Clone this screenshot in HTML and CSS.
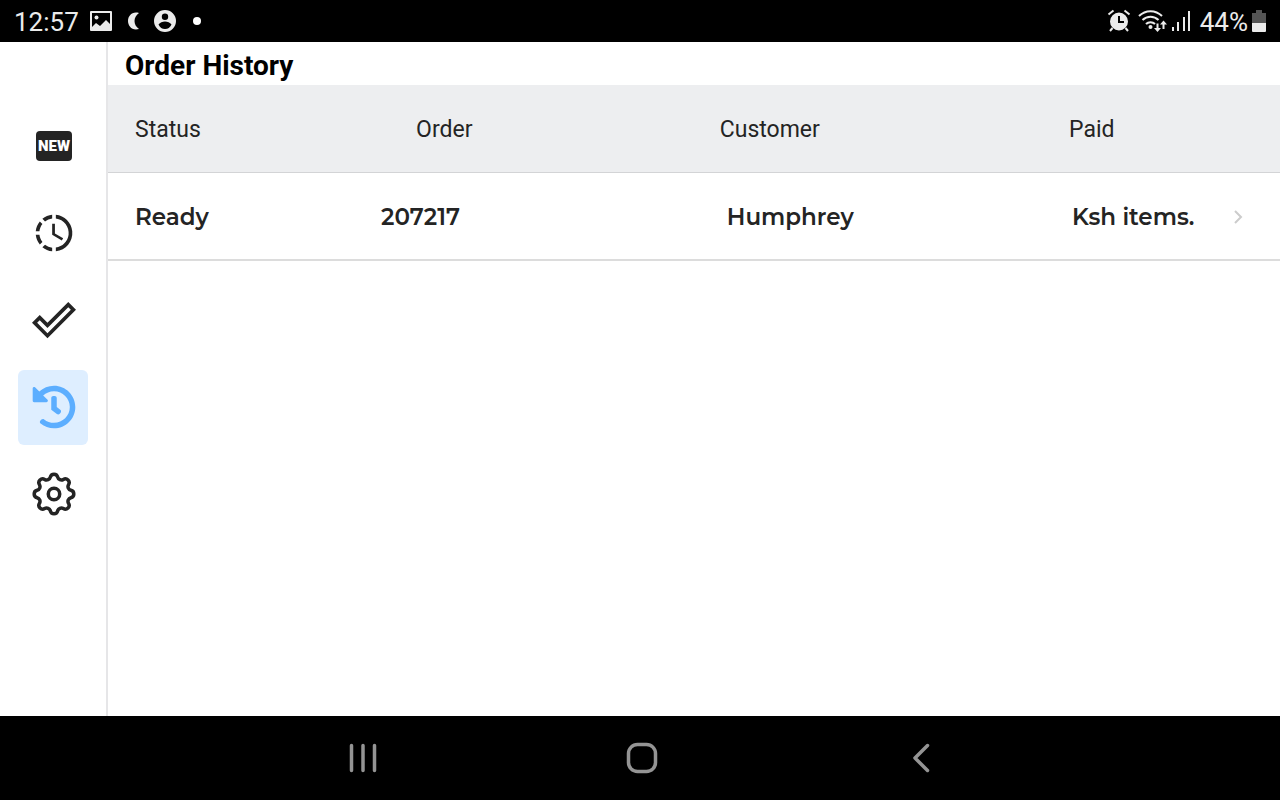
FILE: index.html
```html
<!DOCTYPE html>
<html lang="en">
<head>
<meta charset="utf-8">
<meta name="viewport" content="width=device-width, initial-scale=1">
<title>Order History</title>
<link rel="stylesheet" href="styles.css">
</head>
<body>
<header class="status-bar">
  <div class="status-left">
    <time class="status-text">12:57</time>
    <svg class="icon-image" viewBox="0 0 22 20" width="22" height="20"><path fill-rule="evenodd" d="M1 0h20q1 0 1 1v18q0 1-1 1H1q-1 0-1-1V1q0-1 1-1zM2 2v14l4-4 4 3 6-6 4 4V2z"/><circle cx="6.500" cy="6.500" r="2"/></svg>
    <svg class="icon-moon" viewBox="0 0 12 18" width="12" height="18"><path d="M11 1C4-1 0 4 0 9s4 10 11 8C5 13 5 5 11 1z"/></svg>
    <svg class="icon-person" viewBox="0 0 22 22" width="22" height="22"><path fill-rule="evenodd" d="M11 0a11 11 0 1 1 0 22 11 11 0 0 1 0-22zM11 3.500a3.200 3.200 0 1 0 0 6.400 3.200 3.200 0 0 0 0-6.400zM4.500 14.500c1.500 3 3.500 4.500 6.500 4.500s5-1.500 6.500-4.500c-1.500-2-4-3-6.500-3s-5 1-6.500 3z"/></svg>
    <span class="dot"></span>
  </div>
  <div class="status-right">
    <svg viewBox="0 0 24 24" width="24" height="24"><path fill-rule="evenodd" d="M12 3.500a9 9 0 1 1 0 18 9 9 0 0 1 0-18zM11 7v7h6v-2h-4V7z"/><path d="M5.500 19 3 22M18.500 19l2.500 3M1.500 5.500l5-4M22.500 5.500l-5-4" fill="none" stroke="#ebebeb" stroke-width="2"/></svg>
    <svg class="icon-wifi" viewBox="0 0 29 24" width="29" height="24"><g fill="none" stroke="#ebebeb" stroke-width="2"><path d="M1 7C7.500 .5 17.500 .5 24 7M4.500 11c4.500-4.500 11.500-4.500 16 0M8 15c2.500-2.500 6.500-2.500 9 0"/><path d="M19.500 14.500v6M25.500 20v-6"/></g><circle cx="12.500" cy="18" r="2"/><path d="M16 19h7l-3.500 4zM22 15.500h7l-3.500-4z"/></svg>
    <svg class="icon-signal" viewBox="0 0 19 20" width="19" height="20"><path d="M0 16h2v4H0zM5 11h2v9H5zM11 6h2v14h-2zM16 0h2v20h-2z"/></svg>
    <span class="status-text">44%</span>
    <svg class="icon-battery" viewBox="0 0 14 22" width="14" height="22"><path fill="#555" d="M4 0h6v3h4v11H0V3h4z"/><path d="M0 13h14v8q0 1-1 1H1q-1 0-1-1z"/></svg>
  </div>
</header>

<div class="app">
  <nav class="sidebar" aria-label="Orders">
    <button class="tab" type="button"><span class="new-badge">NEW</span></button>
    <button class="tab" type="button" aria-label="In progress"><svg viewBox="0 0 24 24" width="44" height="44"><path d="M13,2.03V2.05L13,4.05C17.39,4.59 20.5,8.58 19.96,12.97C19.5,16.61 16.64,19.5 13,19.93V21.93C18.5,21.38 22.5,16.5 21.95,11C21.5,6.25 17.73,2.5 13,2.03M11,2.06C9.05,2.25 7.19,3 5.67,4.26L7.1,5.74C8.22,4.84 9.57,4.26 11,4.06V2.06M4.26,5.67C3,7.19 2.25,9.04 2.05,11H4.05C4.24,9.58 4.8,8.23 5.69,7.1L4.26,5.67M2.06,13C2.26,14.96 3.03,16.81 4.27,18.33L5.69,16.9C4.81,15.77 4.24,14.42 4.06,13H2.06M7.1,18.37L5.67,19.74C7.18,21 9.04,21.79 11,22V20C9.58,19.82 8.23,19.25 7.1,18.37M12.5,7V12.25L17,14.92L16.25,16.15L11,13V7H12.5Z"/></svg></button>
    <button class="tab" type="button" aria-label="Ready"><svg viewBox="0 0 24 24" width="44" height="44"><path d="M19.78,2.2L24,6.44L8.44,22L0,13.55L4.22,9.33L8.44,13.55L19.78,2.2M19.78,5L8.44,16.36L4.22,12.19L2.81,13.55L8.44,19.17L21.19,6.44L19.78,5Z"/></svg></button>
    <button class="tab tab-active" type="button" aria-label="History" aria-current="page"><svg viewBox="0 0 512 512" width="44" height="44"><path d="M504 255.531c.253 136.64-111.18 248.372-247.82 248.468-59.015.042-113.223-20.53-155.822-54.911-11.077-8.94-11.905-25.541-1.839-35.607l11.267-11.267c8.609-8.609 22.353-9.551 31.891-1.984C173.062 425.135 212.781 440 256 440c101.705 0 184-82.311 184-184 0-101.705-82.311-184-184-184-48.814 0-93.149 18.969-126.068 49.932l50.754 50.754c10.08 10.08 2.941 27.314-11.313 27.314H24c-8.837 0-16-7.163-16-16V38.627c0-14.254 17.234-21.393 27.314-11.314l49.372 49.372C129.209 34.136 189.552 8 256 8c136.81 0 247.747 110.78 248 247.531zm-180.912 78.784l9.823-12.63c8.138-10.463 6.253-25.542-4.21-33.679L288 256.349V152c0-13.255-10.745-24-24-24h-16c-13.255 0-24 10.745-24 24v135.651l65.409 50.874c10.463 8.137 25.541 6.253 33.679-4.21z"/></svg></button>
    <button class="tab" type="button" aria-label="Settings"><svg class="outline" viewBox="2 2 20 20" width="44" height="44"><path d="M10.325 4.317c.426-1.756 2.924-1.756 3.35 0a1.724 1.724 0 0 0 2.573 1.066c1.543-.94 3.31.826 2.37 2.37a1.724 1.724 0 0 0 1.065 2.572c1.756.426 1.756 2.924 0 3.35a1.724 1.724 0 0 0-1.066 2.573c.94 1.543-.826 3.31-2.37 2.37a1.724 1.724 0 0 0-2.572 1.065c-.426 1.756-2.924 1.756-3.35 0a1.724 1.724 0 0 0-2.573-1.066c-1.543.94-3.31-.826-2.37-2.37a1.724 1.724 0 0 0-1.065-2.572c-1.756-.426-1.756-2.924 0-3.35a1.724 1.724 0 0 0 1.066-2.573c-.94-1.543.826-3.31 2.37-2.37.996.608 2.296.07 2.572-1.065z"/><circle cx="12" cy="12" r="2.600"/></svg></button>
  </nav>

  <main class="content">
    <h1 class="title">Order History</h1>
    <table class="orders">
      <thead>
        <tr><th class="col-status" scope="col">Status</th><th class="col-order" scope="col">Order</th><th class="col-customer" scope="col">Customer</th><th class="col-paid" scope="col" colspan="2">Paid</th></tr>
      </thead>
      <tbody>
        <tr><td class="col-status">Ready</td><td class="col-order">207217</td><td class="col-customer">Humphrey</td><td class="col-paid">Ksh items.</td><td class="col-open"><button class="open" type="button" aria-label="Open order 207217"><svg viewBox="0 0 10 16" width="10" height="16"><path d="M2 2l6 6-6 6"/></svg></button></td></tr>
      </tbody>
    </table>
  </main>
</div>

<footer class="nav-bar">
  <button class="nav-button" type="button" aria-label="Recent apps"><svg viewBox="0 0 32 32" width="32" height="32"><path stroke-width="3.500" d="M4.500 3.500v25M16 3.500v25M27.500 3.500v25"/></svg></button>
  <button class="nav-button" type="button" aria-label="Home"><svg viewBox="0 0 32 32" width="32" height="32"><rect x="2.500" y="2.500" width="27" height="27" rx="9" stroke-width="3.500"/></svg></button>
  <button class="nav-button" type="button" aria-label="Back"><svg viewBox="0 0 32 32" width="32" height="32"><path stroke-width="3.500" d="M22.500 3.500 10 16l12.500 12.500"/></svg></button>
</footer>
</body>
</html>
```
FILE: styles.css
```css
* { box-sizing: border-box; }

body {
  margin: 0;
  min-height: 100vh;
  display: flex;
  flex-direction: column;
  background: #fff;
  color: #242424;
  font-family: Roboto, sans-serif;
}

button {
  border: 0;
  padding: 0;
  background: none;
  color: inherit;
  font: inherit;
  cursor: pointer;
}

svg { display: block; flex: none; }

.status-bar {
  display: flex;
  justify-content: space-between;
  height: 42px;
  padding: 0 14px;
  background: #000;
  color: #ebebeb;
}
.status-left, .status-right { display: flex; align-items: center; }
.status-bar svg { fill: #ebebeb; }
.status-text { padding-top: 2px; font-size: 26px; line-height: 42px; }
.icon-image { margin-left: 11px; }
.icon-moon { margin-left: 16px; }
.icon-person { margin-left: 14px; }
.dot { width: 8px; height: 8px; margin-left: 17px; border-radius: 50%; background: #fff; }
.icon-wifi { margin-left: 7px; }
.icon-signal { margin: 0 9px 0 5px; }
.icon-battery { margin-left: 4px; }

.app { display: flex; flex: 1; }

.sidebar {
  display: flex;
  flex-direction: column;
  align-items: center;
  gap: 12px;
  width: 108px;
  flex: none;
  padding-top: 67px;
  border-right: 2px solid #e6e6e8;
}
.tab {
  display: grid;
  place-items: center;
  width: 70px;
  height: 75px;
  padding: 0 0 1px 2px;
  border-radius: 6px;
  fill: #242424;
}
.tab-active { background: #deeeff; fill: #5caeff; }
.outline { fill: none; stroke: #242424; stroke-width: 1.6; }
.new-badge {
  padding: 0 2px;
  border-radius: 4px;
  background: #242424;
  color: #fff;
  font-size: 15px;
  font-weight: 900;
  line-height: 30px;
}

.content { flex: 1; min-width: 0; }
.title {
  margin: 0;
  padding: 4px 17px 0;
  color: #000;
  font-size: 28px;
  font-weight: 700;
  line-height: 39px;
}

.orders { width: 100%; table-layout: fixed; border-collapse: separate; border-spacing: 0; text-align: left; }
.orders th {
  height: 88px;
  padding: 2px 0 0;
  border-bottom: 1px solid #d3d4d6;
  background: #edeef0;
  font-size: 23px;
  font-weight: 400;
}
.orders td {
  height: 88px;
  padding: 2px 0 0;
  border-bottom: 2px solid #dcdcdc;
  font-family: Montserrat, Inter, sans-serif;
  font-size: 23px;
  font-weight: 600;
}
.orders .col-status { width: 23.300%; padding-left: 27px; }
.orders .col-order { width: 28.900%; }
.orders .col-customer { width: 29.800%; }
.orders th.col-order { padding-left: 35px; }
.orders td.col-customer { padding-left: 7px; }
.orders td.col-paid { padding-left: 3px; width: auto; white-space: nowrap; }
.open { display: grid; place-items: center; width: 44px; height: 44px; margin-left: auto; margin-right: 20px; }
.open svg { fill: none; stroke: #ccc; stroke-width: 2; }

.nav-bar {
  display: grid;
  grid-template-columns: repeat(3, 21.900%);
  justify-content: center;
  height: 84px;
  padding-left: 4px;
  background: #000;
}
.nav-button { display: grid; place-items: center; }
.nav-button svg { fill: none; stroke: #949494; stroke-linecap: round; stroke-linejoin: round; }
```
